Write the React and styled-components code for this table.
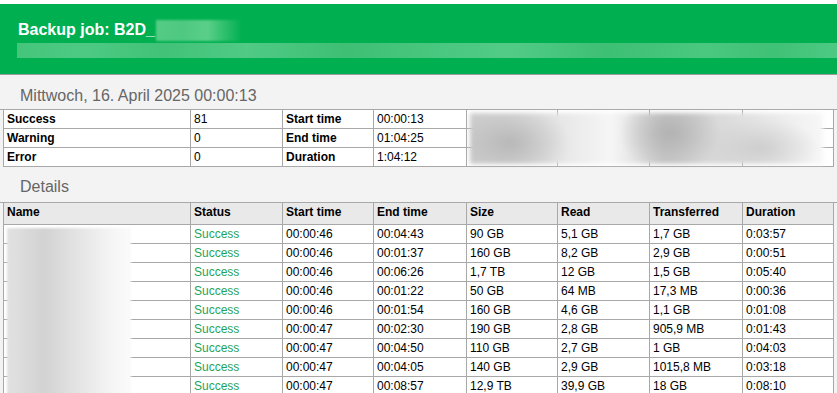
import React from 'react'
import styled, { createGlobalStyle } from 'styled-components'

const GlobalStyle = createGlobalStyle`
  * { box-sizing: border-box; }
  html, body { margin: 0; padding: 0; background: #ffffff; }
  body { font-family: Tahoma, "Liberation Sans", Arial, sans-serif; font-size: 12px; color: #000; }
`

const summary = [
  ['Success', '81', 'Start time', '00:00:13'],
  ['Warning', '0', 'End time', '01:04:25'],
  ['Error', '0', 'Duration', '1:04:12'],
]

const columns = ['Name', 'Status', 'Start time', 'End time', 'Size', 'Read', 'Transferred', 'Duration']

const jobs = [
  ['00:00:46', '00:04:43', '90 GB', '5,1 GB', '1,7 GB', '0:03:57'],
  ['00:00:46', '00:01:37', '160 GB', '8,2 GB', '2,9 GB', '0:00:51'],
  ['00:00:46', '00:06:26', '1,7 TB', '12 GB', '1,5 GB', '0:05:40'],
  ['00:00:46', '00:01:22', '50 GB', '64 MB', '17,3 MB', '0:00:36'],
  ['00:00:46', '00:01:54', '160 GB', '4,6 GB', '1,1 GB', '0:01:08'],
  ['00:00:47', '00:02:30', '190 GB', '2,8 GB', '905,9 MB', '0:01:43'],
  ['00:00:47', '00:04:50', '110 GB', '2,7 GB', '1 GB', '0:04:03'],
  ['00:00:47', '00:04:05', '140 GB', '2,9 GB', '1015,8 MB', '0:03:18'],
  ['00:00:47', '00:08:57', '12,9 TB', '39,9 GB', '18 GB', '0:08:10'],
]

function App() {
  return (
    <Page>
      <GlobalStyle />
      <Header>
        <Title>
          Backup job: B2D_
          <TitleBlur />
        </Title>
        <SubBlur />
      </Header>

      <Section $top={11} $bottom={3}>
        <SectionTitle>Mittwoch, 16. April 2025 00:00:13</SectionTitle>
      </Section>

      <Grid>
        {summary.map((r, i) => (
          <Row key={i}>
            <Cell $bold>{r[0]}</Cell>
            <Cell>{r[1]}</Cell>
            <Cell $bold>{r[2]}</Cell>
            <Cell>{r[3]}</Cell>
            <Cell />
            <Cell />
            <Cell />
            <Cell />
          </Row>
        ))}
        <SummaryBlur />
      </Grid>

      <Section $top={10} $bottom={5}>
        <SectionTitle>Details</SectionTitle>
      </Section>

      <Grid>
        <Row $head>
          {columns.map((c) => (
            <Cell key={c} $bold $head>{c}</Cell>
          ))}
        </Row>
        {jobs.map((j, i) => (
          <Row key={i}>
            <Cell />
            <Cell $ok>Success</Cell>
            {j.map((v, k) => (
              <Cell key={k}>{v}</Cell>
            ))}
          </Row>
        ))}
        <NameBlur />
      </Grid>
    </Page>
  )
}

export default App

const Page = styled.div`
  min-height: 393px;
  padding-top: 4px;
  background: linear-gradient(#ffffff 0 4px, #f3f3f3 4px);
  overflow: hidden;
`

const Header = styled.div`
  height: 71px;
  background: #00b050;
  border-bottom: 1px solid #9a9a9a;
  padding: 16px 0 0 17px;
`

const Title = styled.div`
  display: flex;
  align-items: center;
  height: 20px;
  padding-left: 1px;
  color: #ffffff;
  font-weight: bold;
  font-size: 16px;
  line-height: 20px;
`

const TitleBlur = styled.span`
  display: inline-block;
  width: 86px;
  height: 21px;
  margin-left: 1px;
  background: linear-gradient(90deg, #55cc85 0%, #4fc882 30%, #5acf89 60%, rgba(80, 200, 130, 0) 100%);
  filter: blur(1px);
`

const SubBlur = styled.div`
  height: 15px;
  margin-top: 3px;
  background: linear-gradient(
    90deg,
    #45c57b 0%,
    #4dc983 8%,
    #41c278 18%,
    #50ca85 28%,
    #3ebf74 40%,
    #4ac780 52%,
    #52cb87 60%,
    #3dbf74 72%,
    #4ac880 84%,
    #3fc176 92%,
    #4dc983 100%
  );
`

const Section = styled.div`
  padding: ${(p) => p.$top}px 0 ${(p) => p.$bottom}px 20px;
  background: #f3f3f3;
  border-bottom: 1px solid #a8a8a8;
`

const SectionTitle = styled.div`
  font-size: 16px;
  line-height: 20px;
  color: #666666;
`

const Grid = styled.div`
  position: relative;
  margin-left: 3px;
  width: 831px;
  border-left: 1px solid #a8a8a8;
`

const Row = styled.div`
  display: grid;
  grid-template-columns: 187px 92px 91px 93px 91px 92px 93px 91px;
  height: ${(p) => (p.$head ? 22 : 19)}px;
  background: ${(p) => (p.$head ? '#e9e9e9' : '#ffffff')};
  border-bottom: 1px solid #a8a8a8;
`

const Cell = styled.div`
  padding: 0 3px 0 3px;
  border-right: 1px solid #a8a8a8;
  line-height: 18px;
  white-space: nowrap;
  overflow: hidden;
  font-weight: ${(p) => (p.$bold ? 'bold' : 'normal')};
  color: ${(p) => (p.$ok ? '#1fa45a' : '#000000')};
`

const SummaryBlur = styled.div`
  position: absolute;
  left: 466px;
  top: 3px;
  width: 353px;
  height: 51px;
  background:
    radial-gradient(ellipse 60px 40px at 40px 30px, rgba(180, 180, 180, 0.9), rgba(180, 180, 180, 0) 100%),
    radial-gradient(ellipse 50px 40px at 200px 20px, rgba(175, 175, 175, 0.9), rgba(175, 175, 175, 0) 100%),
    radial-gradient(ellipse 60px 30px at 290px 35px, rgba(200, 200, 200, 0.8), rgba(200, 200, 200, 0) 100%),
    linear-gradient(90deg, #cfcfcf 0%, #e6e6e6 25%, #f6f6f6 40%, #cdcdcd 55%, #dedede 75%, #eeeeee 90%, #f7f7f7 100%);
  filter: blur(2px);
`

const NameBlur = styled.div`
  position: absolute;
  left: 3px;
  top: 25px;
  width: 124px;
  height: 200px;
  background: linear-gradient(90deg, #e2e2e2 0%, #d2d2d2 30%, #e6e6e6 60%, #f5f5f5 85%, #fbfbfb 100%);
  filter: blur(1px);
`
